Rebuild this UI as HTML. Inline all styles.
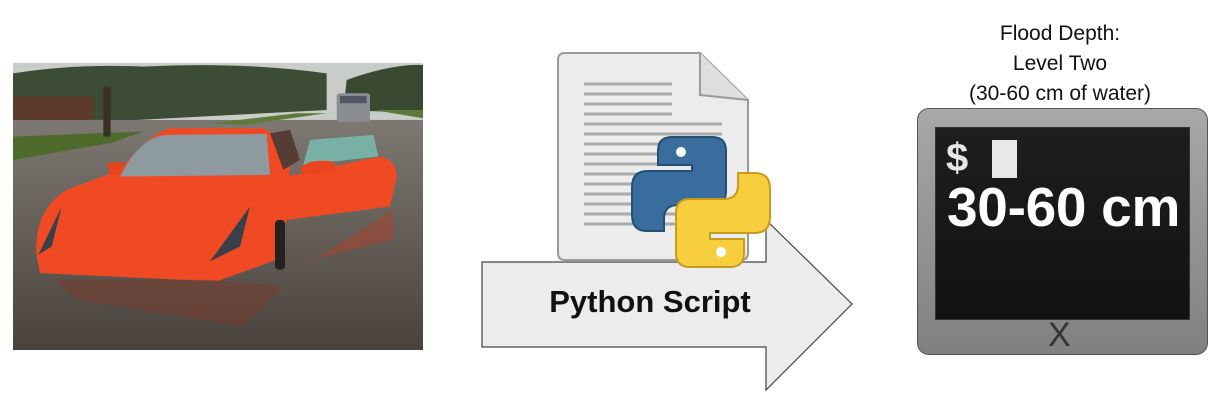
<!DOCTYPE html>
<html><head><meta charset="utf-8"><style>
html,body{margin:0;padding:0;background:#fff;width:1220px;height:412px;overflow:hidden;position:relative;font-family:"Liberation Sans",sans-serif}
.t{position:absolute;left:940px;width:240px;text-align:center;font-size:21px;color:#111;line-height:30px;top:19px}
</style></head><body>
<svg style="position:absolute;left:13px;top:63px" width="410" height="287" viewBox="9 9 1230 862" preserveAspectRatio="none">
<defs><linearGradient id="w" x1="0" y1="0" x2="0" y2="1"><stop offset="0" stop-color="#7d7872"/><stop offset="1" stop-color="#4a423d"/></linearGradient></defs>
<rect x="9" y="9" width="1230" height="862" fill="#c9cdca"/>
<path d="M9,40 Q200,10 400,20 Q700,5 950,40 L950,150 L9,200Z" fill="#3d4c34"/>
<path d="M1010,60 Q1150,10 1239,15 L1239,160 L1000,150Z" fill="#3a4a30"/>
<rect x="9" y="110" width="242" height="88" fill="#5c3a2c"/>
<rect x="9" y="180" width="1230" height="691" fill="url(#w)"/>
<path d="M9,230 L400,215 L300,250 L9,300Z" fill="#4e6b2c"/>
<path d="M600,190 L860,160 L950,160 L700,195Z" fill="#5d7a38"/>
<path d="M1090,150 L1239,150 L1239,175Z" fill="#5d7a38"/>
<rect x="980" y="100" width="100" height="85" rx="8" fill="#8a8e92"/>
<rect x="990" y="108" width="80" height="22" fill="#556"/>
<rect x="280" y="80" width="22" height="150" fill="#3a3026"/>
<path d="M830,350 L1110,290 Q1160,300 1160,350 L1140,440 L830,480Z" fill="#f04a22"/>
<path d="M880,315 L900,240 L1090,225 L1105,290Z" fill="#78b0a6"/>
<path d="M880,620 L1150,450 L1150,540 L900,600Z" fill="#a24430" opacity=".6"/>
<path d="M80,590 Q70,450 170,390 L330,330 Q420,220 480,205 L760,205 Q800,220 840,320 L830,480 L800,600 L620,665 L90,640Z" fill="#f04a24"/>
<path d="M330,350 Q390,230 470,225 L770,222 L780,345Z" fill="#8d9aa0"/>
<path d="M600,605 L720,440 L690,560Z" fill="#3b3f4a"/>
<path d="M85,585 L155,440 L125,560Z" fill="#3b3f4a"/>
<path d="M290,310 L340,305 L330,345 L300,345Z" fill="#e8441e"/>
<path d="M870,325 Q900,295 970,305 L980,335 L880,345Z" fill="#e8441e"/>
<path d="M780,220 L840,210 L870,300 L820,330Z" fill="#553d34"/>
<rect x="795" y="480" width="30" height="150" rx="12" fill="#222"/>
<path d="M130,660 L600,660 L820,680 L700,800 L200,720Z" fill="#7a3a2a" opacity=".5"/>
</svg>

<svg style="position:absolute;left:0;top:0" width="1220" height="412">
<path d="M558,60 Q558,53 565,53 L700,53 L748,100 L748,253 Q748,260 741,260 L565,260 Q558,260 558,253Z" fill="#ececec" stroke="#9a9a9a" stroke-width="2"/>
<path d="M700,53 L700,95 L748,100" fill="#dedede" stroke="#9a9a9a" stroke-width="2"/>
<g stroke="#aaa" stroke-width="3">
<line x1="584" y1="84" x2="672" y2="84"/><line x1="584" y1="94" x2="672" y2="94"/><line x1="584" y1="104" x2="672" y2="104"/><line x1="584" y1="114" x2="672" y2="114"/>
<line x1="584" y1="124" x2="722" y2="124"/><line x1="584" y1="134" x2="722" y2="134"/><line x1="584" y1="144" x2="722" y2="144"/><line x1="584" y1="154" x2="722" y2="154"/>
<line x1="584" y1="164" x2="722" y2="164"/><line x1="584" y1="174" x2="722" y2="174"/><line x1="584" y1="184" x2="722" y2="184"/><line x1="584" y1="194" x2="722" y2="194"/>
<line x1="584" y1="204" x2="722" y2="204"/><line x1="584" y1="214" x2="722" y2="214"/><line x1="584" y1="224" x2="722" y2="224"/>
</g>
<path d="M482,262 L766,262 L766,220 L852,304 L766,390 L766,347 L482,347Z" fill="#ececec" stroke="#444" stroke-width="1.2"/>
<g>
<path d="M672,137 h40 q14,0 14,14 v40 q0,14 -14,14 h-34 q-14,0 -14,14 v12 h-17 q-15,0 -15,-16 v-28 q0,-16 16,-16 h44 v-6 h-34 v-14 q0,-14 14,-14Z" fill="#386d9d" stroke="#244e73" stroke-width="2"/>
<circle cx="681" cy="152" r="5" fill="#fff"/>
<path d="M730,267 h-40 q-14,0 -14,-14 v-40 q0,-14 14,-14 h34 q14,0 14,-14 v-12 h17 q15,0 15,16 v28 q0,16 -16,16 h-44 v6 h34 v14 q0,14 -14,14Z" fill="#f7cf3e" stroke="#c79b1c" stroke-width="2"/>
<circle cx="721" cy="252" r="5" fill="#fff"/>
</g>
</svg>
<div style="position:absolute;left:545px;top:284px;width:210px;text-align:center;font-weight:bold;font-size:31px;color:#111;white-space:nowrap">Python Script</div>

<div class="t">Flood Depth:<br>Level Two<br>(30-60 cm of water)</div>
<div style="position:absolute;left:917px;top:108px;width:291px;height:247px;border-radius:12px;background:linear-gradient(#a8a8a8,#808080);border:1.5px solid #555;box-sizing:border-box"></div>
<div style="position:absolute;left:935px;top:127px;width:253px;height:191px;background:linear-gradient(#1e1e1e,#121212);border:1px solid #333"></div>
<div style="position:absolute;left:946px;top:136px;font-size:40px;font-weight:bold;color:#e6e6e6">$</div>
<div style="position:absolute;left:992px;top:140px;width:25px;height:38px;background:#e8e8e8"></div>
<div style="position:absolute;left:947px;top:175px;font-size:55px;font-weight:bold;color:#fff;letter-spacing:-0.3px;white-space:nowrap">30-60 cm</div>
<div style="position:absolute;left:1048px;top:316px;font-size:34px;color:#333;line-height:38px">X</div>
</body></html>
